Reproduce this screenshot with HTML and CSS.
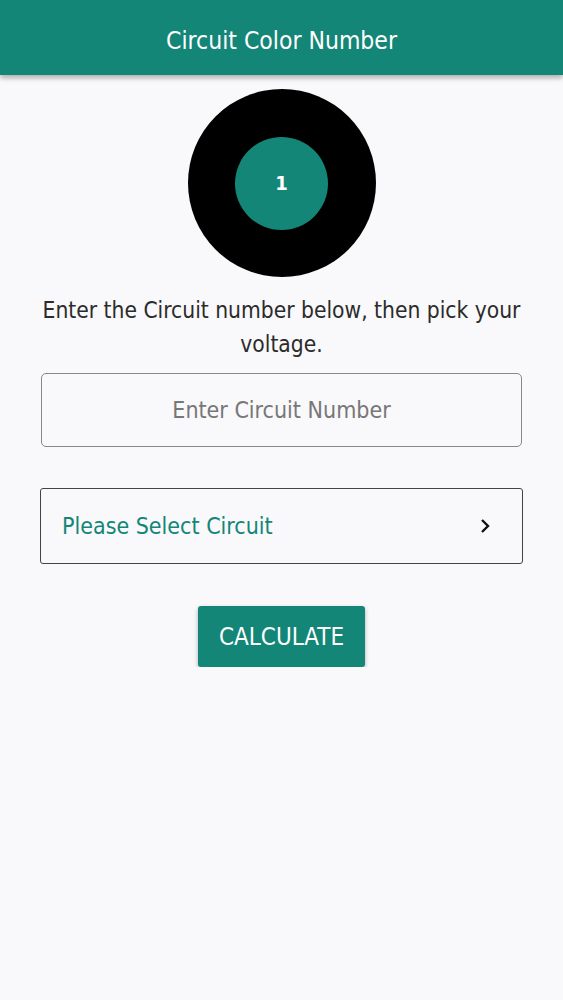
FILE: index.html
```html
<!DOCTYPE html>
<html lang="en">

<head>
    <meta charset="UTF-8">
    <meta name="viewport" content="width=device-width, initial-scale=1.0">
    <title>Circuit Color Number</title>
    <link rel="stylesheet" href="styles.css">
</head>

<body>

    <header class="app-bar">
        <h1>Circuit Color Number</h1>
    </header>

    <main class="content">
        <div class="ring">
            <div class="ring-inner">1</div>
        </div>

        <p class="intro">Enter the Circuit number below, then pick your voltage.</p>

        <input type="text" class="circuit-input" placeholder="Enter Circuit Number">

        <div class="circuit-select">
            <span>Please Select Circuit</span>
            <svg width="14" height="18" viewBox="0 0 14 18">
                <path d="M4 3 L10 9 L4 15" fill="none" stroke="#111" stroke-width="2.4" />
            </svg>
        </div>

        <button class="calc-btn">CALCULATE</button>
    </main>

</body>

</html>
```

FILE: styles.css
```css
body {
    font-family: 'DejaVu Sans Condensed', 'DejaVu Sans', sans-serif;
    background-color: #f9f8fa;
    color: #333;
    margin: 0;
}

.app-bar {
    box-sizing: border-box;
    height: 75px;
    padding-top: 6px;
    background-color: #138677;
    display: flex;
    align-items: center;
    justify-content: center;
    box-shadow: 0 3px 5px rgba(0, 0, 0, 0.3);
}

.app-bar h1 {
    margin: 0;
    color: #fff;
    font-size: 24.5px;
    font-weight: normal;
}

.content {
    display: flex;
    flex-direction: column;
    align-items: center;
    padding: 14px 40px 0 40px;
}

.ring {
    width: 188px;
    height: 188px;
    border-radius: 50%;
    background-color: #000;
    display: flex;
    align-items: center;
    justify-content: center;
}

.ring-inner {
    width: 93px;
    height: 93px;
    border-radius: 50%;
    background-color: #138677;
    color: #fff;
    font-weight: bold;
    font-size: 20px;
    display: flex;
    align-items: center;
    justify-content: center;
}

.intro {
    margin: 16px 0 0 0;
    font-size: 22.6px;
    line-height: 34px;
    text-align: center;
    color: #2b2b2b;
}

.circuit-input {
    box-sizing: border-box;
    width: 481px;
    height: 74px;
    margin-top: 12px;
    border: 1.5px solid #888;
    border-radius: 5px;
    background: transparent;
    font-family: inherit;
    font-size: 23px;
    text-align: center;
    color: #333;
}

.circuit-input::placeholder {
    color: #777;
}

.circuit-select {
    box-sizing: border-box;
    width: 483px;
    height: 76px;
    margin-top: 41px;
    border: 1.5px solid #444;
    border-radius: 3px;
    display: flex;
    align-items: center;
    justify-content: space-between;
    padding: 0 30px 0 21px;
    color: #138677;
    font-size: 23px;
}

.calc-btn {
    margin-top: 42px;
    width: 167px;
    height: 61px;
    background-color: #138677;
    color: #fff;
    border: none;
    border-radius: 3px;
    font-family: inherit;
    font-size: 24px;
    box-shadow: 0 2px 4px rgba(0, 0, 0, 0.3);
    cursor: pointer;
}
```
